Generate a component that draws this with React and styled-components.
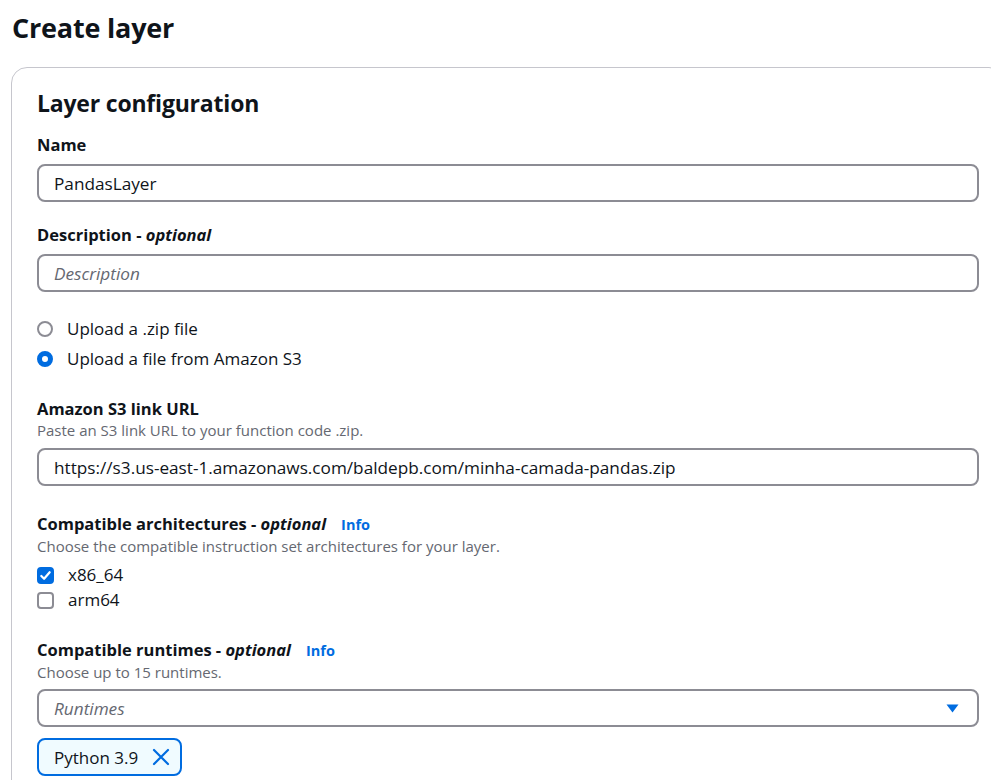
import React from "react";
import styled, { createGlobalStyle } from "styled-components";

const GlobalStyle = createGlobalStyle`
  html, body {
    margin: 0;
    padding: 0;
    background: #ffffff;
    overflow: hidden;
  }
  body {
    font-family: "Open Sans", "Noto Sans", Arial, sans-serif;
    color: #0f141a;
  }
`;

const Page = styled.div`
  padding: 10px 0 0 11px;
  width: 1100px;
`;

const Title = styled.h1`
  margin: 0 0 0 1px;
  font-size: 27px;
  line-height: 36px;
  font-weight: 700;
  letter-spacing: -0.2px;
`;

const Panel = styled.section`
  margin-top: 21px;
  width: 994px;
  box-sizing: border-box;
  border: 1px solid #c6c6cd;
  border-radius: 16px;
  padding: 20px 25px 40px 25px;
`;

const PanelTitle = styled.h2`
  margin: 0 0 16px 0;
  font-size: 23px;
  line-height: 30px;
  font-weight: 700;
  letter-spacing: -0.2px;
`;

const Field = styled.div`
  display: flex;
  flex-direction: column;
  margin-bottom: ${(p) => p.$gap}px;
`;

const LabelRow = styled.div`
  display: flex;
  align-items: baseline;
  gap: 15px;
  font-size: 16.5px;
  line-height: 22px;
  font-weight: 700;
  margin-bottom: ${(p) => (p.$tight ? 0 : 8)}px;

  em {
    font-style: italic;
  }
`;

const InfoLink = styled.span`
  color: #006ce0;
  font-size: 14.5px;
  font-weight: 700;
`;

const Hint = styled.div`
  color: #656871;
  font-size: 15px;
  line-height: 20px;
  margin-bottom: ${(p) => p.$after}px;
`;

const Input = styled.div`
  height: 38px;
  box-sizing: border-box;
  border: 2px solid #8c8c94;
  border-radius: 8px;
  display: flex;
  align-items: center;
  justify-content: space-between;
  padding: 0 18px 0 15px;
  font-size: 17.2px;
  color: ${(p) => (p.$placeholder ? "#656871" : "#0f141a")};
  font-style: ${(p) => (p.$placeholder ? "italic" : "normal")};
`;

const OptionList = styled.div`
  display: flex;
  flex-direction: column;
  gap: ${(p) => p.$gap}px;
  margin-bottom: ${(p) => p.$after}px;
`;

const Option = styled.label`
  display: flex;
  align-items: center;
  gap: 14px;
  font-size: 17px;
  line-height: 22px;
`;

const Radio = styled.span`
  width: 16px;
  height: 16px;
  box-sizing: border-box;
  border-radius: 50%;
  border: ${(p) => (p.$checked ? "5px solid #006ce0" : "2px solid #8c8c94")};
  background: #ffffff;
  flex: none;
`;

const Checkbox = styled.span`
  width: 17px;
  height: 17px;
  box-sizing: border-box;
  border-radius: 4px;
  border: 2px solid ${(p) => (p.$checked ? "#006ce0" : "#8c8c94")};
  background: ${(p) => (p.$checked ? "#006ce0" : "#ffffff")};
  display: flex;
  align-items: center;
  justify-content: center;
  flex: none;
`;

const Token = styled.div`
  display: inline-flex;
  align-items: center;
  gap: 14px;
  align-self: flex-start;
  height: 38px;
  box-sizing: border-box;
  margin-top: 11px;
  padding: 0 10px 0 15px;
  border: 2px solid #006ce0;
  border-radius: 8px;
  background: #f0fbff;
  font-size: 17px;
`;

const Check = () => (
  <svg width="13" height="13" viewBox="0 0 14 14">
    <path d="M2.5 7.5 L5.5 10.5 L11.5 3.5" fill="none" stroke="#fff" strokeWidth="2.4" strokeLinecap="round" strokeLinejoin="round" />
  </svg>
);

const Caret = () => (
  <svg width="13" height="9" viewBox="0 0 13 9">
    <path d="M0.5 0.5 H12.5 L6.5 8.5 Z" fill="#006ce0" />
  </svg>
);

const Cross = () => (
  <svg width="18" height="18" viewBox="0 0 18 18">
    <path d="M2 2 L16 16 M16 2 L2 16" fill="none" stroke="#006ce0" strokeWidth="2.2" strokeLinecap="round" />
  </svg>
);

export default function App() {
  return (
    <>
      <GlobalStyle />
      <Page>
        <Title>Create layer</Title>
        <Panel>
          <PanelTitle>Layer configuration</PanelTitle>

          <Field $gap={22}>
            <LabelRow>Name</LabelRow>
            <Input>PandasLayer</Input>
          </Field>

          <Field $gap={26}>
            <LabelRow>
              <span>
                Description - <em>optional</em>
              </span>
            </LabelRow>
            <Input $placeholder>Description</Input>
          </Field>

          <OptionList $gap={8} $after={28}>
            <Option>
              <Radio />
              Upload a .zip file
            </Option>
            <Option>
              <Radio $checked />
              Upload a file from Amazon S3
            </Option>
          </OptionList>

          <Field $gap={27}>
            <LabelRow $tight>Amazon S3 link URL</LabelRow>
            <Hint $after={8}>Paste an S3 link URL to your function code .zip.</Hint>
            <Input>https://s3.us-east-1.amazonaws.com/baldepb.com/minha-camada-pandas.zip</Input>
          </Field>

          <Field $gap={28}>
            <LabelRow $tight>
              <span>
                Compatible architectures - <em>optional</em>
              </span>
              <InfoLink>Info</InfoLink>
            </LabelRow>
            <Hint $after={8}>Choose the compatible instruction set architectures for your layer.</Hint>
            <OptionList $gap={3} $after={0}>
              <Option>
                <Checkbox $checked>
                  <Check />
                </Checkbox>
                x86_64
              </Option>
              <Option>
                <Checkbox />
                arm64
              </Option>
            </OptionList>
          </Field>

          <Field $gap={0}>
            <LabelRow $tight>
              <span>
                Compatible runtimes - <em>optional</em>
              </span>
              <InfoLink>Info</InfoLink>
            </LabelRow>
            <Hint $after={7}>Choose up to 15 runtimes.</Hint>
            <Input $placeholder>
              Runtimes
              <Caret />
            </Input>
            <Token>
              Python 3.9
              <Cross />
            </Token>
          </Field>
        </Panel>
      </Page>
    </>
  );
}
